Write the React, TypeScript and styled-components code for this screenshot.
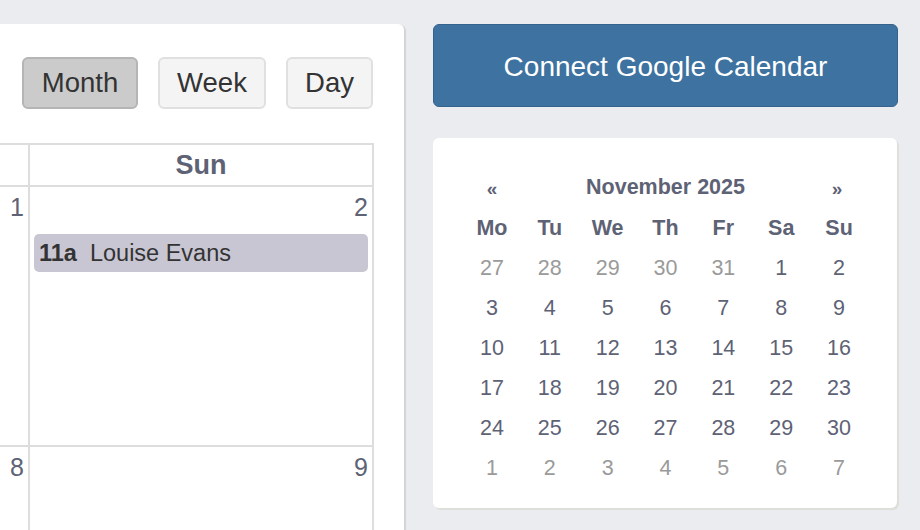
import styled, { createGlobalStyle } from 'styled-components';

const GlobalStyle = createGlobalStyle`
  html, body {
    margin: 0;
    padding: 0;
    background: #ebecf0;
    font-family: "Liberation Sans", Arial, Helvetica, sans-serif;
    overflow: hidden;
  }
`;

// page: the big calendar on the left, sidebar on the right
const Page = styled.div`
  display: flex;
  align-items: flex-start;
  gap: 29px;
  padding-top: 24px;
  width: 920px;
  height: 530px;
  box-sizing: border-box;
  overflow: hidden;
`;

// white card that holds the month view, cut off at the left edge of the window
const CalendarCard = styled.div`
  margin-left: -20px;
  width: 424px;
  height: 506px;
  background: #fff;
  border-radius: 6px 6px 0 0;
  box-shadow: 2px 1px 1px rgba(0, 0, 0, 0.1);
  padding: 33px 30px 0 0;
  box-sizing: border-box;
  overflow: hidden;
  flex-shrink: 0;
`;

// month / week / day switcher
const Toolbar = styled.div`
  display: flex;
  justify-content: flex-end;
  gap: 20px;
  margin-bottom: 34px;
  margin-right: 1px;
`;

const ViewButton = styled.button<{ $active?: boolean; $width: number }>`
  width: ${(p) => p.$width}px;
  height: 52px;
  padding: 0;
  font-family: inherit;
  font-size: 27.5px;
  color: #333;
  background: ${(p) => (p.$active ? '#cbcbcb' : '#f4f4f4')};
  border: 2px solid ${(p) => (p.$active ? '#b5b5b5' : '#e0e0e0')};
  border-radius: 6px;
  cursor: pointer;
`;

// grid with the last two columns of the month (Sat mostly hidden, Sun)
const MonthGrid = styled.div`
  display: grid;
  grid-template-columns: 1fr 344px;
  grid-template-rows: 42px 260px 1fr;
  height: 406px;
  border-top: 2px solid #dddddd;
`;

const HeadCell = styled.div`
  border-right: 2px solid #dddddd;
  border-bottom: 2px solid #dddddd;
  display: flex;
  align-items: center;
  justify-content: center;
  font-size: 27px;
  font-weight: bold;
  color: #5e6275;
`;

const DayCell = styled.div`
  border-right: 2px solid #dddddd;
  border-bottom: 2px solid #dddddd;
  display: flex;
  flex-direction: column;
  padding: 5px 4px 0;
`;

const DayNumber = styled.div`
  text-align: right;
  font-size: 25px;
  line-height: 30px;
  color: #5e6275;
`;

// an event bar inside a day
const Event = styled.div`
  margin-top: 12px;
  height: 38px;
  display: flex;
  align-items: center;
  gap: 13px;
  padding: 0 5px;
  background: #c9c6d3;
  border-radius: 5px;
  font-size: 23.5px;
  color: #333;
  white-space: nowrap;
`;

const EventTime = styled.span`
  font-weight: bold;
`;

// sidebar
const Sidebar = styled.div`
  width: 465px;
  display: flex;
  flex-direction: column;
  gap: 31px;
  flex-shrink: 0;
`;

const ConnectButton = styled.button`
  height: 83px;
  background: #3e72a0;
  border: 1px solid #35638d;
  border-radius: 6px;
  color: #fff;
  font-family: inherit;
  font-size: 28px;
  cursor: pointer;
  padding: 3px 0 0;
`;

const MiniCard = styled.div`
  width: 464px;
  background: #fff;
  border-radius: 6px;
  box-shadow: 2px 2px 0 #dededb;
  padding: 29px 29px 20px 30px;
  box-sizing: border-box;
`;

const MiniGrid = styled.div`
  display: grid;
  grid-template-columns: repeat(7, 1fr);
  grid-template-rows: 41px;
  grid-auto-rows: 40px;
  width: 405px;
  font-size: 21.5px;
  color: #5e6275;
`;

const MiniCell = styled.div<{ $muted?: boolean; $bold?: boolean }>`
  display: flex;
  align-items: center;
  justify-content: center;
  font-weight: ${(p) => (p.$bold ? 'bold' : 'normal')};
  color: ${(p) => (p.$muted ? '#9a9a9a' : '#5e6275')};
`;

const MonthTitle = styled.div`
  grid-column: span 5;
  display: flex;
  align-items: center;
  justify-content: center;
  font-weight: bold;
  font-size: 21.5px;
`;

const NavArrow = styled.div<{ $shift: number }>`
  display: flex;
  align-items: center;
  justify-content: center;
  font-weight: bold;
  font-size: 19px;
  padding-top: 2px;
  margin-left: ${(p) => p.$shift}px;
  cursor: pointer;
`;

const weekdays = ['Mo', 'Tu', 'We', 'Th', 'Fr', 'Sa', 'Su'];

const range = (days: number[], muted: boolean) => days.map((day) => ({ day, muted }));

// November 2025, weeks starting on Monday
const weeks = [
  [...range([27, 28, 29, 30, 31], true), ...range([1, 2], false)],
  range([3, 4, 5, 6, 7, 8, 9], false),
  range([10, 11, 12, 13, 14, 15, 16], false),
  range([17, 18, 19, 20, 21, 22, 23], false),
  range([24, 25, 26, 27, 28, 29, 30], false),
  range([1, 2, 3, 4, 5, 6, 7], true),
];

export default function App() {
  return (
    <>
      <GlobalStyle />
      <Page>
        <CalendarCard>
          <Toolbar>
            <ViewButton $active $width={116}>Month</ViewButton>
            <ViewButton $width={108}>Week</ViewButton>
            <ViewButton $width={87}>Day</ViewButton>
          </Toolbar>
          <MonthGrid>
            <HeadCell />
            <HeadCell>Sun</HeadCell>
            <DayCell>
              <DayNumber>1</DayNumber>
            </DayCell>
            <DayCell>
              <DayNumber>2</DayNumber>
              <Event>
                <EventTime>11a</EventTime>
                <span>Louise Evans</span>
              </Event>
            </DayCell>
            <DayCell>
              <DayNumber>8</DayNumber>
            </DayCell>
            <DayCell>
              <DayNumber>9</DayNumber>
            </DayCell>
          </MonthGrid>
        </CalendarCard>

        <Sidebar>
          <ConnectButton>Connect Google Calendar</ConnectButton>
          <MiniCard>
            <MiniGrid>
              <NavArrow $shift={0}>«</NavArrow>
              <MonthTitle>November 2025</MonthTitle>
              <NavArrow $shift={-4}>»</NavArrow>
              {weekdays.map((w) => (
                <MiniCell key={w} $bold>
                  {w}
                </MiniCell>
              ))}
              {weeks.map((week, i) =>
                week.map((d, j) => (
                  <MiniCell key={`${i}-${j}`} $muted={d.muted}>
                    {d.day}
                  </MiniCell>
                ))
              )}
            </MiniGrid>
          </MiniCard>
        </Sidebar>
      </Page>
    </>
  );
}
